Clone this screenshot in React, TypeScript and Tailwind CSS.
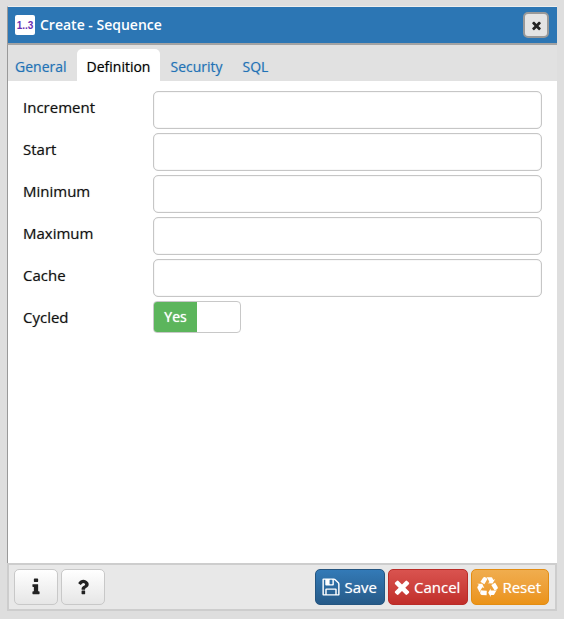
import { useState } from "react";
import type { ReactNode } from "react";

const TIMES =
  "M1490 1322q0 40-28 68l-136 136q-28 28-68 28t-68-28l-294-294-294 294q-28 28-68 28t-68-28l-136-136q-28-28-28-68t28-68l294-294-294-294q-28-28-28-68t28-68l136-136q28-28 68-28t68 28l294 294 294-294q28-28 68-28t68 28l136 136q28 28 28 68t-28 68l-294 294 294 294q28 28 28 68z";
const FLOPPY =
  "M512 1536h768v-384h-768v384zm896 0h128v-896q0-14-10-38.5t-20-34.5l-281-281q-10-10-34-20t-39-10v416q0 40-28 68t-68 28h-576q-40 0-68-28t-28-68v-416h-128v1280h128v-416q0-40 28-68t68-28h832q40 0 68 28t28 68v416zm-384-928v-320q0-13-9.5-22.5t-22.5-9.5h-192q-13 0-22.5 9.5t-9.5 22.5v320q0 13 9.5 22.5t22.5 9.5h192q13 0 22.5-9.5t9.5-22.5zm640 32v928q0 40-28 68t-68 28h-1344q-40 0-68-28t-28-68v-1344q0-40 28-68t68-28h928q40 0 88 20t76 48l280 280q28 28 48 76t20 88z";
const INFO =
  "M1216 1344v128q0 26-19 45t-45 19h-512q-26 0-45-19t-19-45v-128q0-26 19-45t45-19h64v-384h-64q-26 0-45-19t-19-45v-128q0-26 19-45t45-19h384q26 0 45 19t19 45v576h64q26 0 45 19t19 45zm-128-1152v192q0 26-19 45t-45 19h-256q-26 0-45-19t-19-45v-192q0-26 19-45t45-19h256q26 0 45 19t19 45z";
const QUESTION =
  "M1088 1256v240q0 16-12 28t-28 12h-240q-16 0-28-12t-12-28v-240q0-16 12-28t28-12h240q16 0 28 12t12 28zm316-600q0 54-15.5 101t-35 76.5-55 59.5-57.5 43.5-61 35.5q-41 23-68.5 65t-27.5 67q0 17-12 32.5t-28 15.5h-240q-15 0-25.5-18.5t-10.5-37.5v-45q0-83 65-156.5t143-108.5q59-27 84-56t25-76q0-42-46.5-74t-107.5-32q-65 0-108 29-35 25-107 115-13 16-31 16-12 0-25-8l-164-125q-13-10-15.5-25t5.5-28q160-266 464-266 80 0 161 31t146 83 106 127.5 41 158.5z";
const RECYCLE =
  "M836 1169l-15 368-2 22-420-29q-36-3-67-31.5t-47-65.5q-11-27-14.5-55t4-65 12-55 21.5-64 19-53q78 12 509 28zm-387-586l180 379-147-92q-63 72-111.5 144.5t-72.5 125-39.5 94.5-18.5 63l-4 21-190-357q-17-26-18-56t6-47l8-18q35-63 114-188l-140-86zm1231 517l-188 359q-12 29-36.5 46.5t-43.5 20.5l-18 4q-71 7-219 12l8 164-230-367 211-362 7 173q170 16 283 5t170-33zm-785-924q-47 63-265 435l-317-187-19-12 225-356q20-31 60-45t80-10q24 2 48.5 12t42 21 41.5 33 36 34.5 36 39.5 32 35zm655 307l212 363q18 37 12.5 76t-27.5 74q-13 20-33 37t-38 28-48.5 22-47 16-51.5 14-46 12q-34-72-265-436l313-195zm-143-226l142-83-220 373-419-20 151-86q-34-89-75-166t-75.5-123.5-64.5-80-47-46.5l-17-13 405 1q31-3 58 10.5t39 28.5l11 15q39 61 112 190z";

function Glyph({ path, className, viewBox = "0 0 1792 1792" }: { path: string; className: string; viewBox?: string }) {
  return (
    <svg viewBox={viewBox} fill="currentColor" aria-hidden="true" className={className}>
      <path d={path} />
    </svg>
  );
}

function ActionButton({ tone, children }: { tone: string; children: ReactNode }) {
  return (
    <button
      type="button"
      className={`flex h-9 items-center gap-1 rounded-[5px] border pr-[7px] pl-[5px] text-white text-shadow-[0_0_1px_#ffffff99] ${tone}`}
    >
      {children}
    </button>
  );
}

const helpButton =
  "flex h-9 w-11 items-center justify-center rounded-[5px] border border-[#c8c8c8] bg-linear-to-b from-white to-[#e6e6e6] text-[#222]";

const tabs = ["General", "Definition", "Security", "SQL"];
const fields = ["Increment", "Start", "Minimum", "Maximum", "Cache"];

export default function App() {
  const [active, setActive] = useState("Definition");
  const [cycled, setCycled] = useState(true);

  return (
    <div className="flex min-h-screen flex-col bg-[#dedede] px-[7px] pt-[6px] pb-2 font-['Open_Sans','Noto_Sans',sans-serif] text-[15px] text-[#111]">
      <div className="flex grow flex-col">
        <header className="flex h-[39px] items-center border-t border-b-2 border-l border-t-[#eee] border-b-[#a3a3a3] border-l-[#999] bg-[#2c76b4] pr-2 pl-[7px]">
          <span className="mr-[5px] flex size-5 items-center justify-center rounded-xs bg-white font-['Liberation_Sans',Arial,sans-serif] text-[10px] font-bold text-[#6b2fb3]">
            1..3
          </span>
          <h1 className="grow text-sm font-semibold text-white">Create - Sequence</h1>
          <button
            type="button"
            aria-label="Close"
            className="flex size-[26px] items-center justify-center rounded-[5px] border-2 border-[#999] bg-[#e4e4e4] text-[#222]"
          >
            <Glyph path={TIMES} className="size-[13px]" />
          </button>
        </header>

        <main className="flex grow flex-col border-l border-[#999] bg-white">
          <div role="tablist" className="flex h-9 items-end bg-[#e1e1e1] text-sm">
            {tabs.map((tab) => (
              <button
                key={tab}
                type="button"
                role="tab"
                aria-selected={tab === active}
                onClick={() => setActive(tab)}
                className={
                  tab === active
                    ? "h-8 rounded-t-[5px] bg-white px-[10px] pt-1 text-black text-shadow-[0_0_1px_#00000066]"
                    : "h-8 px-[10px] pt-1 text-[#2272b6] first:pl-[7px] text-shadow-[0_0_1px_#2272b666]"
                }
              >
                {tab}
              </button>
            ))}
          </div>

          <form className="flex flex-col gap-1 px-[15px] pt-[10px]">
            {fields.map((name) => (
              <div key={name} className="flex">
                <label htmlFor={name} className="w-[130px] shrink-0 pt-[5px] text-shadow-[0_0_1px_#00000066]">
                  {name}
                </label>
                <input
                  id={name}
                  type="text"
                  className="h-[38px] min-w-0 grow rounded-[5px] border border-[#c6c6c6] bg-white px-3 shadow-[inset_0_0_1px_#bbb] outline-none"
                />
              </div>
            ))}
            <div className="flex">
              <label htmlFor="cycled" className="w-[130px] shrink-0 pt-[5px] text-shadow-[0_0_1px_#00000066]">
                Cycled
              </label>
              <label className="flex h-8 w-22 cursor-pointer overflow-hidden rounded border border-[#c8c8c8] bg-white text-sm text-white">
                <input
                  id="cycled"
                  type="checkbox"
                  checked={cycled}
                  onChange={(e) => setCycled(e.target.checked)}
                  className="sr-only"
                />
                <span
                  className={
                    cycled
                      ? "flex w-1/2 items-center justify-center bg-[#5cb55c] text-shadow-[0_0_1px_#ffffff]"
                      : "ml-auto flex w-1/2 items-center justify-center bg-[#2c76b4]"
                  }
                >
                  {cycled ? "Yes" : "No"}
                </span>
              </label>
            </div>
          </form>
        </main>

        <footer className="flex h-12 items-center gap-[3px] border-2 border-[#cdcdcd] bg-[#e8e8e8] pr-[6px] pl-[5px]">
          <button type="button" aria-label="Information" className={helpButton}>
            <Glyph path={INFO} className="size-5" />
          </button>
          <button type="button" aria-label="Help" className={helpButton}>
            <Glyph path={QUESTION} className="size-5" />
          </button>
          <span className="grow" />
          <ActionButton tone="border-[#245580] bg-linear-to-b from-[#337ab7] to-[#265a88]">
            <Glyph path={FLOPPY} className="size-5" />
            Save
          </ActionButton>
          <ActionButton tone="border-[#b92c28] bg-linear-to-b from-[#d9534f] to-[#c12e2a]">
            <Glyph path={TIMES} viewBox="232 232 1328 1328" className="size-4" />
            Cancel
          </ActionButton>
          <ActionButton tone="border-[#e38d13] bg-linear-to-b from-[#f0ad4e] to-[#eb9316]">
            <Glyph path={RECYCLE} className="size-[21px]" />
            Reset
          </ActionButton>
        </footer>
      </div>
    </div>
  );
}
